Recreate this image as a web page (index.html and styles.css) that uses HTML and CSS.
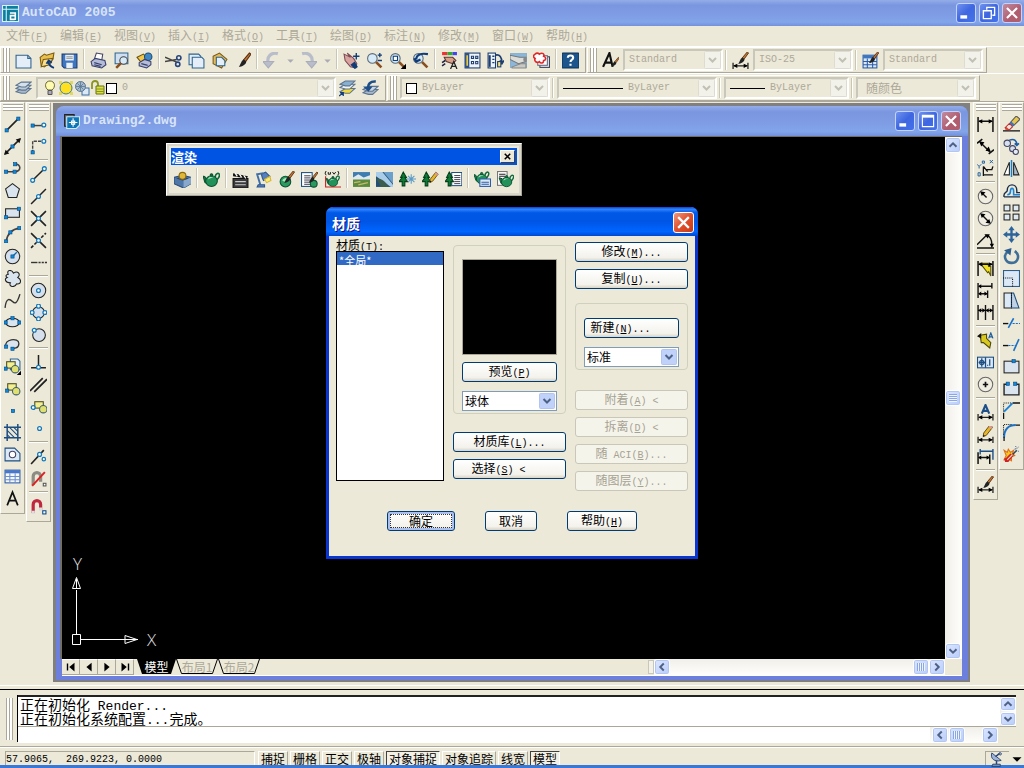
FILE: index.html
```html
<!DOCTYPE html>
<html lang="zh-CN">
<head>
	<meta charset="utf-8">
	<title>AutoCAD 2005</title>
	<link rel="stylesheet" href="styles.css">
</head>
<body>
	<header class="titlebar app-title">
		<svg class="app-logo" viewBox="0 0 16 16"><rect width="16" height="16" fill="#0b7f9e"/><path d="M.5.5h15v15H.5zM4 1v15M1 4h15" stroke="#d8f2fa" fill="none"/><path d="M7.500 7.500h5v6.500M12 10H8v3.500h4" stroke="#fff" stroke-width="1.500" fill="none"/></svg>
		<h1>AutoCAD 2005</h1>
		<button class="win-btn" data-icon="winMin" aria-label="最小化"></button>
		<button class="win-btn" data-icon="winRestore" aria-label="还原"></button>
		<button class="win-btn win-close" data-icon="winClose" aria-label="关闭"></button>
	</header>

	<nav class="menu">
		<button>文件<span class="en">(<u>F</u>)</span></button>
		<button>编辑<span class="en">(<u>E</u>)</span></button>
		<button>视图<span class="en">(<u>V</u>)</span></button>
		<button>插入<span class="en">(<u>I</u>)</span></button>
		<button>格式<span class="en">(<u>O</u>)</span></button>
		<button>工具<span class="en">(<u>T</u>)</span></button>
		<button>绘图<span class="en">(<u>D</u>)</span></button>
		<button>标注<span class="en">(<u>N</u>)</span></button>
		<button>修改<span class="en">(<u>M</u>)</span></button>
		<button>窗口<span class="en">(<u>W</u>)</span></button>
		<button>帮助<span class="en">(<u>H</u>)</span></button>
	</nav>

	<div class="bar-row">
		<div class="toolbar">
			<span class="grip"></span>
			<div class="tools" data-tools="newFile open save | print preview publish | cut copy paste match | undo drop redo drop | pan zoom zoomWin zoomPrev | properties designCenter palettes sheetSet markup | help"></div>
		</div>
		<div class="toolbar">
			<span class="grip"></span>
			<div class="tools" data-tools="textStyle"></div>
			<div class="combo w100"><select class="en" aria-label="文字样式" disabled><option>Standard</option></select></div>
			<span class="sep"></span>
			<div class="tools" data-tools="dimStyle"></div>
			<div class="combo w100"><select class="en" aria-label="标注样式" disabled><option>ISO-25</option></select></div>
			<span class="sep"></span>
			<div class="tools" data-tools="tableStyle"></div>
			<div class="combo w100"><select class="en" aria-label="表格样式" disabled><option>Standard</option></select></div>
		</div>
	</div>

	<div class="bar-row bar-row-2">
		<div class="toolbar">
			<span class="grip"></span>
			<div class="tools" data-tools="layers"></div>
			<div class="combo w300">
				<span class="layer-state" data-icon="bulb"></span>
				<span class="layer-state" data-icon="sun"></span>
				<span class="layer-state" data-icon="vpFreeze"></span>
				<span class="layer-state" data-icon="lock"></span>
				<span class="swatch"></span>
				<select class="en" aria-label="图层" disabled><option>0</option></select>
			</div>
			<div class="tools" data-tools="layerCurrent layerPrev"></div>
		</div>
		<div class="toolbar">
			<span class="grip"></span>
			<div class="combo w150"><span class="swatch"></span><select class="en" aria-label="颜色" disabled><option>ByLayer</option></select></div>
			<span class="sep"></span>
			<div class="combo w160"><span class="line-sample long"></span><select class="en" aria-label="线型" disabled><option>ByLayer</option></select></div>
			<span class="sep"></span>
			<div class="combo w125"><span class="line-sample"></span><select class="en" aria-label="线宽" disabled><option>ByLayer</option></select></div>
			<span class="sep"></span>
			<div class="combo w120"><select aria-label="打印样式" disabled><option>随颜色</option></select></div>
		</div>
	</div>

	<main class="workspace">
		<div class="side-bars">
			<div class="toolbar vertical">
				<span class="grip"></span>
				<div class="tools" data-tools="line xline pline polygon rect arc circle cloud spline ellipse ellipseArc insertBlock makeBlock point hatch region table mtext"></div>
			</div>
			<div class="toolbar vertical">
				<span class="grip"></span>
				<div class="tools" data-tools="track snapFrom | snapEnd snapMid snapInt snapApp snapExt | snapCen snapQuad snapTan | snapPerp snapPar snapIns snapNode | snapNear snapNone | snapSet"></div>
			</div>
		</div>

		<div class="mdi">
			<section class="drawing">
				<header class="titlebar">
					<svg class="doc-logo" viewBox="0 0 16 16"><path d="M1.500 1.500h9v3H5v8H1.500z" fill="#6c7379" stroke="#222"/><path d="M3.500 3.500h12v8l-3 3h-9z" fill="#0b76b4" stroke="#cfeafa"/><path d="M9.500 5v8M5.500 9h8" stroke="#fff"/><path d="M8 7.500h3v3H8z" stroke="#fff" fill="none"/></svg>
					<h2>Drawing2.dwg</h2>
					<button class="win-btn" data-icon="winMin" aria-label="最小化"></button>
					<button class="win-btn" data-icon="winMax" aria-label="最大化"></button>
					<button class="win-btn win-close" data-icon="winClose" aria-label="关闭"></button>
				</header>

				<div class="view">
					<div class="canvas">
						<svg class="ucs" width="104" height="104" viewBox="0 0 104 104">
							<path d="M6.500 84V39M11 88.500h57M2.500 83.500h8v10h-8z"/>
							<path d="M6.500 26.500l-4 11h8zM6.500 28v9M67 88.500l-12-4v8zM56 88.500h11"/>
							<text x="3" y="19">Y</text>
							<text x="77" y="95">X</text>
						</svg>

						<div class="render-bar">
							<header><h3>渲染</h3><button aria-label="关闭" data-icon="smallClose"></button></header>
							<div class="tools" data-tools="hide | render | scenes lights materials matLib mapping | background fog lsNew lsEdit lsLib | renderPrefs stats"></div>
						</div>

						<form class="dialog">
							<header><h2>材质</h2><button type="button" class="win-btn win-close" data-icon="winClose" aria-label="关闭"></button></header>
							<div class="dialog-body">
								<div class="columns">
									<div class="col-list">
										<label for="mats">材质<span class="en">(<u>T</u>):</span></label>
										<select id="mats" size="2"><option selected>*全局*</option></select>
									</div>
									<div class="col-preview">
										<div class="group">
											<div class="preview"></div>
											<button type="button">预览<span class="en">(<u>P</u>)</span></button>
											<select class="drop" aria-label="预览对象"><option>球体</option></select>
										</div>
										<button type="button">材质库<span class="en">(<u>L</u>)...</span></button>
										<button type="button" class="lead">选择<span class="en">(<u>S</u>) &lt;</span></button>
									</div>
									<div class="col-actions">
										<button type="button">修改<span class="en">(<u>M</u>)...</span></button>
										<button type="button">复制<span class="en">(<u>U</u>)...</span></button>
										<div class="group">
											<button type="button" class="lead">新建<span class="en">(<u>N</u>)...</span></button>
											<select class="drop" aria-label="材质类型"><option>标准</option></select>
										</div>
										<button type="button" disabled>附着<span class="en">(<u>A</u>) &lt;</span></button>
										<button type="button" disabled>拆离<span class="en">(<u>D</u>) &lt;</span></button>
										<button type="button" disabled>随<span class="en"> ACI(<u>B</u>)...</span></button>
										<button type="button" disabled>随图层<span class="en">(<u>Y</u>)...</span></button>
									</div>
								</div>
								<div class="dialog-foot">
									<button type="button" class="default">确定</button>
									<button type="button" class="cancel">取消</button>
									<button type="button" class="assist">帮助<span class="en">(<u>H</u>)</span></button>
								</div>
							</div>
						</form>
					</div>
					<div class="scroll scroll-v">
						<button data-icon="up" aria-label="向上"></button>
						<span class="thumb"></span>
						<button data-icon="down" aria-label="向下"></button>
					</div>
				</div>

				<div class="tab-row">
					<div class="tab-nav">
						<button data-icon="first" aria-label="第一个"></button>
						<button data-icon="prev" aria-label="上一个"></button>
						<button data-icon="next" aria-label="下一个"></button>
						<button data-icon="last" aria-label="最后一个"></button>
					</div>
					<button class="tab active">模型</button>
					<button class="tab">布局1</button>
					<button class="tab">布局2</button>
					<span class="splitter"></span>
					<div class="scroll scroll-h">
						<button data-icon="left" aria-label="向左"></button>
						<span class="thumb"></span>
						<button data-icon="right" aria-label="向右"></button>
					</div>
				</div>
			</section>
		</div>

		<div class="side-bars">
			<div class="toolbar vertical">
				<span class="grip"></span>
				<div class="tools" data-tools="dimLinear dimAligned dimOrd | dimRad dimDia dimAng | dimQuick dimBase dimCont | leader tolerance centerMark | dimEdit dimTextEdit dimUpdate | dimStyle"></div>
			</div>
			<div class="toolbar vertical">
				<span class="grip"></span>
				<div class="tools" data-tools="erase copyObj mirror offset array move rotate scale stretch trim extend breakAt break chamfer fillet explode"></div>
			</div>
		</div>
	</main>

	<section class="command">
		<span class="grip"></span>
		<div class="command-box">
			<div class="history">
				<div class="log">
					<p>正在初始化<span> Render...</span></p>
					<p>正在初始化系统配置<span>...</span>完成。</p>
				</div>
				<div class="scroll scroll-v">
					<button data-icon="up" aria-label="向上"></button>
					<button data-icon="down" aria-label="向下"></button>
				</div>
			</div>
			<div class="prompt">
				<input type="text" aria-label="命令行">
				<div class="scroll scroll-h">
					<button data-icon="left" aria-label="向左"></button>
					<span class="thumb"></span>
					<button data-icon="right" aria-label="向右"></button>
				</div>
			</div>
		</div>
	</section>

	<footer class="status">
		<output class="coords en">57.9065,  269.9223, 0.0000</output>
		<button>捕捉</button>
		<button>栅格</button>
		<button>正交</button>
		<button>极轴</button>
		<button class="on">对象捕捉</button>
		<button>对象追踪</button>
		<button>线宽</button>
		<button class="on">模型</button>
		<span class="tray" data-icon="dish"></span>
		<button class="tray-menu" data-icon="caret" aria-label="状态栏菜单"></button>
	</footer>

	<script src="icons.js"></script>
</body>
</html>
```

FILE: styles.css
```css
* {
	box-sizing: border-box;
}

html, body {
	height: 100%;
	margin: 0;
}

body {
	display: flex;
	flex-direction: column;
	background: #ece9d8;
	color: #000;
	font: 12px/14px "Noto Sans CJK SC", sans-serif;
	overflow: hidden;
}

h1, h2, h3, p {
	margin: 0;
	font-weight: normal;
}

button, select, input {
	margin: 0;
	padding: 0;
	border: 0;
	background: none;
	color: inherit;
	font: inherit;
}

.en {
	font-family: "Liberation Mono", monospace;
	font-size: 10px;
	white-space: pre;
}

svg {
	display: block;
	flex: none;
}

/* title bars */
.titlebar {
	display: flex;
	align-items: center;
	gap: 3px;
	height: 30px;
	padding: 0 7px;
	flex: none;
	color: #d8e4f8;
	background: linear-gradient(#93ade9, #7a96df 20%, #7f9de5 60%, #82a5e9 85%, #7390dc);
}

.titlebar h1, .titlebar h2 {
	flex: 1;
	font: bold 13px/16px "Liberation Mono", monospace;
}

.app-title {
	height: 26px;
	padding: 0 2px;
}

.app-logo, .doc-logo {
	width: 17px;
	height: 17px;
}

.win-btn {
	display: flex;
	width: 20px;
	height: 20px;
	border: 1px solid #c3d3fb;
	border-radius: 3px;
	background: linear-gradient(135deg, #6f92ee, #3e66e0 50%, #4473ea);
}

.win-btn svg {
	width: 18px;
	height: 18px;
}

.win-close {
	background: linear-gradient(135deg, #c08b9e, #b05c70 60%, #b0606c);
}

/* menu */
.menu {
	display: flex;
	gap: 12px;
	height: 20px;
	padding-left: 6px;
	flex: none;
	color: #aca899;
}

.menu button {
	width: 42px;
	white-space: nowrap;
}

/* toolbars */
.bar-row {
	display: flex;
	gap: 1px;
	height: 27px;
	flex: none;
	border-top: 1px solid #fff;
}

.bar-row-2 {
	height: 29px;
	padding-top: 1px;
	border-bottom: 1px solid #aca899;
}

.toolbar {
	display: flex;
	align-items: center;
	padding-right: 3px;
	border: 1px solid #aca899;
	border-top-color: #fff;
	border-left-color: #fff;
}

.grip {
	width: 7px;
	height: 24px;
	margin: 0 2px;
	border: solid #aca899;
	border-width: 0 1px;
	background: linear-gradient(90deg, #fff 0 2px, #aca899 2px 3px, #fff 3px 5px);
}

.tools {
	display: flex;
}

.tool {
	display: flex;
	align-items: center;
	justify-content: center;
	width: 23px;
	height: 22px;
}

.tool svg {
	width: 17px;
	height: 17px;
}

.tool.narrow {
	width: 14px;
}

.sep {
	width: 6px;
	height: 20px;
	flex: none;
	background: linear-gradient(90deg, transparent 2px, #c9c6b6 2px 3px, #fff 3px 4px, transparent 4px);
}

.combo {
	display: flex;
	align-items: center;
	height: 22px;
	margin-left: 1px;
	padding-left: 4px;
	border: 2px solid #c9c7ba;
	border-right-color: #fff;
	border-bottom-color: #fff;
}

.combo select {
	appearance: none;
	flex: 1;
	min-width: 0;
	height: 18px;
	color: #aca899;
	opacity: 1;
	background: url("data:image/svg+xml,%3Csvg xmlns='http://www.w3.org/2000/svg' width='17' height='18'%3E%3Crect x='.5' y='.5' width='16' height='17' rx='1' fill='%23f3f2ea' stroke='%23dedcd0'/%3E%3Cpath d='M5 7l3.500 3.500L12 7' fill='none' stroke='%23c2c0b4' stroke-width='2'/%3E%3C/svg%3E") right center no-repeat;
}

.w100 { width: 100px; }
.w120 { width: 120px; }
.w125 { width: 125px; }
.w150 { width: 150px; }
.w160 { width: 160px; }
.w300 { width: 300px; }

.w120 select {
	padding-left: 4px;
}

.layer-state, .layer-state svg {
	width: 16px;
	height: 16px;
}

.swatch {
	width: 11px;
	height: 11px;
	margin-right: 5px;
	border: 1px solid #000;
	background: #fff;
}

.line-sample {
	width: 35px;
	height: 1px;
	margin-right: 5px;
	background: #000;
}

.line-sample.long {
	width: 60px;
}

.vertical, .vertical .tools {
	flex-direction: column;
}

.vertical {
	width: 25px;
	padding: 0 0 4px;
}

.vertical .grip {
	width: 20px;
	height: 7px;
	margin: 1px 0 2px;
	border-width: 1px 0;
	background: linear-gradient(#fff 0 2px, #aca899 2px 3px, #fff 3px 5px);
}

.vertical .sep {
	width: 19px;
	height: 6px;
	margin: 0 auto;
	background: linear-gradient(transparent 2px, #aca899 2px 3px, #fff 3px 4px, transparent 4px);
}

/* workspace */
.workspace {
	display: flex;
	flex: 1;
	min-height: 0;
}

.side-bars {
	display: flex;
	align-items: flex-start;
	gap: 1px;
}

.mdi {
	display: flex;
	flex: 1;
	min-width: 0;
	margin: 1px 3px 3px 2px;
	padding: 3px 2px 2px 3px;
	background: #808080;
}

.drawing {
	display: flex;
	flex-direction: column;
	flex: 1;
	min-width: 0;
	padding: 0 6px 4px 4px;
	border-radius: 8px 8px 0 0;
	background: #6d7fdd;
}

.drawing > .titlebar {
	height: 30px;
	margin: 0 -6px 0 -4px;
	border-radius: 8px 8px 0 0;
}

.view {
	display: flex;
	flex: 1;
	min-height: 0;
	border: 1px solid #716f64;
	border-width: 1px 0 0 2px;
}

.canvas {
	position: relative;
	display: flex;
	align-items: flex-end;
	flex: 1;
	min-width: 0;
	padding: 0 8px 4px;
	background: #000;
}

.ucs {
	fill: none;
	stroke: #fff;
}

.ucs text {
	fill: #e0e0e0;
	stroke: none;
	font: 300 17px "Open Sans", sans-serif;
}

/* scroll bars */
.scroll {
	display: flex;
	flex: none;
	justify-content: space-between;
	background: #f8f7f2;
}

.scroll-v {
	flex-direction: column;
	width: 17px;
	padding-right: 1px;
	background: linear-gradient(90deg, #f1efe9, #fefefc);
}

.scroll-h {
	height: 16px;
	background: linear-gradient(#f1efe9, #fefefc);
}

.scroll button, .thumb {
	display: flex;
	align-items: center;
	justify-content: center;
	width: 16px;
	height: 16px;
	border: 1px solid #fff;
	border-radius: 3px;
	background: linear-gradient(135deg, #dce6ff, #b9cdfa);
	box-shadow: inset 0 0 0 1px #b2c6f2;
}

.scroll svg {
	width: 14px;
	height: 14px;
}

.thumb::before {
	content: "";
	width: 8px;
	height: 8px;
	background: repeating-linear-gradient(90deg, #8ba6e4 0 1px, #eef4fe 1px 2px);
}

.scroll-v .thumb::before {
	background: repeating-linear-gradient(#8ba6e4 0 1px, #eef4fe 1px 2px);
}

.scroll-h .thumb {
	margin-left: auto;
}

/* layout tabs */
.tab-row {
	display: flex;
	height: 17px;
	flex: none;
	padding-right: 17px;
	margin-left: 2px;
	background: #ece9d8;
	border-bottom: 1px solid #fff;
}

.tab-nav {
	display: flex;
	margin-right: 3px;
}

.tab-nav button {
	width: 18px;
	padding-left: 1px;
	border-right: 1px solid #aca899;
	border-bottom: 1px solid #aca899;
	border-top: 1px solid #fff;
}

.tab-nav svg {
	width: 16px;
	height: 14px;
}

.tab {
	width: 42px;
	height: 15px;
	line-height: 14px;
	color: #aca899;
	background: url("data:image/svg+xml,%3Csvg xmlns='http://www.w3.org/2000/svg' width='42' height='15'%3E%3Cpath d='M.5 0l5 14.500h31L41.500 0' fill='none' stroke='%23000'/%3E%3C/svg%3E") no-repeat;
}

.tab.active {
	width: 39px;
	color: #fff;
	background: url("data:image/svg+xml,%3Csvg xmlns='http://www.w3.org/2000/svg' width='39' height='15'%3E%3Cpath d='M0 0l5 15h29l5-15'/%3E%3C/svg%3E") no-repeat;
}

.splitter {
	width: 6px;
	height: 14px;
	margin: 1px 0 0 auto;
	border: 1px solid #c9c7ba;
	background: #f4f2e8;
}

.tab-row .scroll {
	width: 33%;
}

/* floating render toolbar */
.render-bar {
	position: absolute;
	left: 104px;
	top: 6px;
	padding: 4px;
	border: 1px solid #aca899;
	border-top-color: #fff;
	border-left-color: #fff;
	background: #ece9d8;
	box-shadow: inset 0 0 0 2px #d9d6cb;
}

.render-bar header {
	display: flex;
	align-items: center;
	height: 17px;
	padding: 0 2px 0 0;
	color: #fff;
	background: #0054e3;
}

.render-bar h3 {
	flex: 1;
	font-size: 13px;
	line-height: 15px;
	font-weight: bold;
}

.render-bar header button {
	width: 15px;
	height: 13px;
	border: 1px solid #404040;
	border-top-color: #fff;
	border-left-color: #fff;
	background: #ece9d8;
}

.render-bar header svg {
	width: 13px;
	height: 11px;
}

.render-bar .tools {
	padding: 3px 0 1px;
}

/* materials dialog */
.dialog {
	position: absolute;
	left: 264px;
	top: 70px;
	width: 372px;
	border: 3px solid #0a35d0;
	border-top: 0;
	border-radius: 7px 7px 0 0;
	background: #ece9d8;
}

.dialog > header {
	display: flex;
	align-items: center;
	height: 29px;
	margin: 0 -3px;
	padding: 2px 4px 0 6px;
	border-radius: 7px 7px 0 0;
	color: #fff;
	background: linear-gradient(#0a3fd6, #2d84ff 8%, #0058e6 20%, #0055e5 50%, #0066ff 85%, #0048d0);
}

.dialog > header h2 {
	flex: 1;
	font-size: 14px;
	line-height: 20px;
	font-weight: bold;
	text-shadow: 1px 1px #0f1089;
}

.dialog > header .win-btn {
	width: 21px;
	height: 21px;
	border-color: #fff;
	background: linear-gradient(135deg, #f0987c, #e0502c 50%, #c83a14);
}

.dialog > header svg {
	width: 19px;
	height: 19px;
}

.dialog-body {
	padding: 2px 7px 25px;
}

.columns {
	display: grid;
	grid-template-columns: 108px 113px 113px;
	gap: 9px;
}

.dialog-body button {
	display: block;
	width: 100%;
	height: 20px;
	border: 1px solid #003c74;
	border-radius: 3px;
	line-height: 16px;
	background: linear-gradient(#fff, #f3f2ec 80%, #d9d4c8);
}

.dialog-body button:disabled {
	border-color: #c9c7ba;
	color: #a5a294;
	background: #f5f4ea;
}

.dialog-body button.lead {
	padding-right: 22px;
}

.group {
	border: 1px solid #d0d0bf;
	border-radius: 4px;
}

.drop {
	appearance: none;
	display: block;
	width: 100%;
	height: 20px;
	padding-left: 2px;
	border: 1px solid #7f9db9;
	background: #fff url("data:image/svg+xml,%3Csvg xmlns='http://www.w3.org/2000/svg' width='16' height='16'%3E%3Crect x='.5' y='.5' width='15' height='15' rx='1' fill='%23c1d2fa' stroke='%23b1c5f0'/%3E%3Cpath d='M4.500 6L8 9.500 11.500 6' fill='none' stroke='%234d6185' stroke-width='2'/%3E%3C/svg%3E") right 1px center no-repeat;
}

.col-list label {
	display: block;
	height: 13px;
	line-height: 14px;
}

#mats {
	display: block;
	width: 100%;
	height: 230px;
	border: 1px solid #000;
	border-radius: 0;
	background: #fff;
	overflow: hidden;
	outline: 0;
	font-size: 11px;
}

#mats option {
	height: 13px;
	min-height: 13px;
	padding: 0 2px;
	line-height: 12px;
}

#mats option:checked {
	color: #fff;
	background: linear-gradient(#316ac5, #316ac5);
}

.col-preview {
	padding-top: 7px;
}

.col-preview .group {
	padding: 13px 8px 2px;
	margin-bottom: 18px;
}

.preview {
	height: 96px;
	margin-bottom: 7px;
	border: 1px solid #aca899;
	background: #000;
}

.col-preview .group button {
	margin-bottom: 9px;
}

.col-preview > button + button, .col-actions > button + button {
	margin-top: 7px;
}

.col-actions {
	padding-top: 4px;
}

.col-actions .group {
	margin: 14px 0 20px;
	padding: 14px 8px 2px;
}

.col-actions .group button {
	margin-bottom: 9px;
}

.dialog-foot {
	display: flex;
	gap: 30px;
	padding: 20px 51px 0;
}

.dialog-foot .default {
	width: 68px;
	box-shadow: inset 0 0 0 2px #a9c0f0;
	outline: 1px dotted #333;
	outline-offset: -4px;
}

.dialog-foot .cancel {
	width: 52px;
}

.dialog-foot .assist {
	width: 70px;
}

/* command window */
.command {
	display: flex;
	height: 62px;
	flex: none;
	padding: 5px 8px 4px 4px;
	border-top: 1px solid #fff;
	border-bottom: 1px solid #aca899;
	background: linear-gradient(#ece9d8 3px, #000 3px 4px, #ece9d8 4px);
}

.command > .grip {
	height: 42px;
	margin: 7px 4px 0 2px;
}

.command-box {
	flex: 1;
	min-width: 0;
	margin-top: 4px;
	border-left: 1px solid #000;
}

.history {
	display: flex;
	height: 32px;
	border-top: 2px solid #222;
	border-bottom: 1px solid #aca899;
	background: #fff;
}

.log {
	flex: 1;
	padding-left: 2px;
	font-size: 14px;
}

.log p {
	height: 14px;
	line-height: 14px;
	white-space: pre;
}

.log span {
	font-family: "Liberation Mono", monospace;
	font-size: 13px;
}

.history .scroll-v {
	width: 16px;
	padding: 0;
}

.history .scroll button {
	height: 14px;
}

.prompt {
	display: flex;
	padding-right: 18px;
}

.prompt input {
	flex: 1;
	min-width: 0;
	height: 16px;
	background: #fff;
	outline: 0;
}

.prompt .scroll {
	width: 68px;
	padding-left: 2px;
}

.prompt .thumb {
	margin: 0 auto 0 1px;
}

/* status bar */
.status {
	display: flex;
	align-items: stretch;
	gap: 2px;
	height: 21px;
	flex: none;
	padding: 3px 1px 0 5px;
	border-top: 1px solid #fff;
	border-bottom: 3px solid #3a78d8;
}

.coords {
	width: 250px;
	margin-right: 1px;
	border: 1px solid #aca899;
	border-right-color: #fff;
	border-bottom: 0;
	line-height: 15px;
}

.status button {
	padding: 0 2px;
	border: 1px solid #fff;
	border-right-color: #aca899;
	border-bottom: 0;
	white-space: nowrap;
}

.status button.on {
	border-color: #404040 #fff #fff #404040;
	background: #f3f1e6;
}

.tray {
	width: 24px;
	margin-left: auto;
	padding-left: 3px;
	border-left: 1px solid #aca899;
	border-top: 1px solid #aca899;
}

.tray svg {
	width: 15px;
	height: 15px;
}

.status .tray-menu {
	width: 12px;
	padding: 0;
	border: 0;
}

.tray-menu svg {
	width: 12px;
	height: 14px;
}
```

FILE: icons.js
```js
// small pieces that several icons share
const sq = (x, y) => `<rect x="${x - 1.5}" y="${y - 1.5}" width="3" height="3" fill="#0a8be0" stroke="#0a4a80" stroke-width=".6"/>`;
const ring = (x, y, r = 1.8) => `<circle cx="${x}" cy="${y}" r="${r}" fill="#fff" stroke="#1578b8" stroke-width="1.200"/>`;
const p = (d, stroke = '#222', width = 1.2, fill = 'none') => `<path d="${d}" stroke="${stroke}" stroke-width="${width}" fill="${fill}"/>`;
const f = (d, fill, stroke = 'none') => `<path d="${d}" fill="${fill}" stroke="${stroke}"/>`;
const c = (x, y, r, fill = '#d5e0ec', stroke = '#222') => `<circle cx="${x}" cy="${y}" r="${r}" fill="${fill}" stroke="${stroke}"/>`;
const box = (x, y, w, h, fill = '#dbe8f6', stroke = '#1d4e80') => `<rect x="${x}" y="${y}" width="${w}" height="${h}" fill="${fill}" stroke="${stroke}"/>`;
const at = (x, y, s, body) => `<g transform="translate(${x} ${y}) scale(${s})">${body}</g>`;

const brush = f('M14.500 0l1.500 1-5 7-2-1.500z', '#c07838', '#5c3010') + f('M9 6l2.500 2c0 3-4 5-7 5 1.500-1.500 2-5.500 4.500-7z', '#222');
const pencil = f('M12 0l3 2.500-7 9-3.500 1.500.5-4z', '#e5b52c', '#5a4310') + f('M12 0l3 2.500-1.500 2-3-2.500z', '#d99') + f('M4.500 13l.3-2 1.500 1z', '#000');
const teapot = '<path d="M11.500 6c0-4 4-5 4-2 0 2-1.500 3-2.500 4.500" fill="none" stroke="#0f6a3c" stroke-width="1.500"/>' + f('M0 5c1.500-.5 2.500 1 3 3l1 4-2-1C1 9 1 7 0 5z', '#1c7c4a', '#0b5230') + '<ellipse cx="8" cy="9.500" rx="5.500" ry="5" fill="#23915a" stroke="#0b5230"/>' + f('M4.500 8c1-3 4-3 5-2-2 0-3 1-5 2z', '#a8e8bc') + c(8, 3.8, 1.2, '#167045', '#0b5230');
const layer = (y, fill) => f(`M1 ${y + 3}l5-3h9l-5 4.500H6z`, fill, '#5d7590');
const hdim = y => p(`M1 ${y - 3}v6M15 ${y - 3}v6M2 ${y}h12`) + f(`M1 ${y}l4-2v4zM15 ${y}l-4-2v4z`, '#000');
const tree = f('M4 1l3 5H5.500L8 10H5.500v4H3v-4H0l3-4H1.500z', '#0c7a34', '#063f1a');
const lens = c(6, 6, 4.5, '#d6eaf8', '#5b6b78') + p('M9.500 9.500l5 5', '#8a4f20', 2.5);
const block = box(2.5, 3.5, 8, 6, '#f3ee90', '#4d4d20') + c(10.500, 10.500, 3.5, '#e0e070', '#3d5e70');
const magnet = '<path d="M3 14V6a3.500 3.500 0 0 1 7 0v5" fill="none" stroke-width="3" stroke="';
const sheet = box(3.5, 1.5, 10, 13, '#fff', '#1d4e80') + p('M6 4.500h6M6 6.500h6M6 8.500h6M6 10.500h6M6 12.500h6', '#334', 0.9);
const undoArrow = p('M14 1.500C8 0 3 4 5 11', '#b9bdc9', 3) + f('M0 9l10 0-5 6z', '#b9bdc9', '#a9adbb');

const icons = {
	// standard toolbar
	newFile: f('M1 3h11l3 3v9H1z', '#e4eef8', '#2e6490') + p('M12 3v3h3', '#2e6490', 1),
	open: f('M2 5l4-3 2 1 7-2-1 6-8 7-3-1z', '#e8c04c', '#7a5a10') + f('M5 7l9-1-3 6-8 2z', '#f8e090', '#7a5a10') + p('M15 15c-3-1-5-3-5-6M8 11l2-3 3 2', '#123c78', 1.8),
	save: f('M1 2h14v13H3l-2-2z', '#3f76c0', '#1c3c74') + f('M4 2.500h8V8H4zM5 10h6v5H5z', '#e8f0f8') + p('M5 4.500h6M5 6h6', '#888', 0.8),
	print: f('M4 7l2-6 6 1-1 6z', '#fff', '#446') + f('M1 9l4-3 9 2 1 4-4 3-9-2z', '#b4bcd8', '#39406c') + p('M4 10l7 2M4 12l6 1.500', '#39406c'),
	preview: f('M2 1h12v10H2z', '#cfe0f2', '#2e6490') + c(10, 8, 3.6, '#d6eaf8', '#444') + p('M7.500 10.500L3 15', '#8a4f20', 2.4),
	publish: f('M1 5l6-3 4 4-6 4z', '#f0c84c', '#6b5212') + c(11.5, 4.5, 3.5, '#3f88c4', '#1c4a74') + f('M3 10l5-3 6 2v3l-4 3-7-2z', '#b4bcd8', '#39406c') + p('M5 11l6 1.500', '#39406c'),
	cut: p('M0 5l11 4.500M0 9L11 7', '#444', 1.4) + '<circle cx="13" cy="5.500" r="2" fill="none" stroke="#27457c" stroke-width="1.500"/><circle cx="12" cy="11.500" r="2" fill="none" stroke="#27457c" stroke-width="1.500"/>',
	copy: f('M1 2h9l2 2v8H1z', '#e4eef8', '#2e6490') + f('M4 5h9l2 2v8H4z', '#e4eef8', '#2e6490'),
	paste: f('M2 4l6-3 7 6-5 8-8-4z', '#e3bc58', '#7a5a1c') + f('M5 5h5l3 3v5H5z', '#e4eef8', '#2e6490'),
	match: at(0, 1, 1, brush),
	undo: undoArrow,
	redo: `<g transform="translate(16 0) scale(-1 1)">${undoArrow}</g>`,
	drop: f('M5 7h6l-3 3z', '#a8aab4'),
	pan: f('M1 2l6 3-3-4 6 5 3 5-1 4-5-1-5-6z', '#d9a4a0', '#7c4c54') + f('M7 12l4-3 3 5-3 2z', '#123c78') + p('M12.500 1v6M9.500 4h6', '#123c78', 1.3),
	zoom: lens + p('M11 3h4M13 1v4M11 8h4', '#123c78'),
	zoomWin: lens + box(4, 4, 4, 4, '#fff', '#123c78') + f('M16 11v5h-5z', '#000'),
	zoomPrev: lens + p('M4 7c0-5 5-6 11-5M2 6l2 3 4-2', '#123c78', 2),
	properties: '<rect x="1" y="0" width="5" height="3" fill="#e33"/><rect x="6" y="0" width="5" height="3" fill="#3a3"/><rect x="11" y="0" width="4" height="3" fill="#44e"/>' + f('M3 5l8 0 3 3-3 3-6-2z', '#d9a08c', '#5c3630') + p('M1 10l3-2M1 13l3-2', '#224', 1.5) + p('M9 16l3-7 3 7M10 13.500h4', '#222', 1.2),
	designCenter: box(1, 1, 14, 14, '#eef4fa', '#1d3e70') + f('M1 1h4v14H1z', '#2b528c') + p('M3 3v10', '#f0d040', 1.5) + '<path d="M7 4h2v2H7zM11 4h2v2h-2zM7 9h2v2H7zM11 9h2v2h-2z" fill="#fff" stroke="#1d3e70"/>',
	palettes: box(1, 1, 7, 14, '#eef4fa', '#1d3e70') + p('M2.500 3v11', '#1d3e70', 2) + p('M5 4h2M5 7h2M5 10h2', '#1d3e70') + p('M8 3c4-1 6 2 6 7M12 8l2 3 2-3', '#1d3e70', 1.6) + box(10, 9, 3, 5, '#f4e58a', '#1d3e70'),
	sheetSet: box(0.5, 1.5, 15, 13, '#8ab8dc', '#8ab0cc') + f('M0 3l9 2 6 0v4l-7 2-8-4z', '#dcdcd8', '#777') + '<ellipse cx="14" cy="7" rx="1.500" ry="2.200" fill="#888"/>' + f('M2 14l8-3 5 0v4H2z', '#c8c8c4', '#888'),
	markup: box(6.5, 4.5, 9, 10, '#dbe8f6', '#445') + box(4.5, 3.5, 9, 9, '#fff', '#667') + '<path d="M2 2c2-2 3-1 4 0 3-2 5 0 4 2 3 1 2 4 0 4 0 3-3 3-4 1-3 2-5-1-4-3-2-1-2-3 0-4z" fill="#fff" stroke="#e02828" stroke-width="1.500"/>',
	help: '<rect x="0" y="1" width="16" height="14" rx="1" fill="#1d568c" stroke="#0c3058"/>' + p('M5.500 5.500c0-3 5-3 5 0 0 2-2.500 1.500-2.500 4M8 11v2', '#fff', 2),
	textStyle: p('M1 14L7 1l3 13M3 10h6', '#111', 2) + at(6, 5, 0.65, brush),
	dimStyle: at(2, 0, 0.85, brush) + hdim(13),
	tableStyle: box(1, 3, 13, 12, '#dbe8f6', '#2c5ca8') + f('M1 3h13v3H1z', '#3f76c0') + p('M1 9h13M1 12h13M5 6v9M10 6v9', '#2c5ca8', 1) + at(3, 0, 0.8, brush),

	// layers
	layers: layer(8, '#a9b9c9') + layer(5, '#bccbd8') + layer(2, '#d6e0ea'),
	layerCurrent: layer(8, '#f0d838') + layer(4, '#f0f4f8') + layer(1, '#88b0d0') + p('M0 15l4-3M1 12h3v3', '#123c78'),
	layerPrev: layer(9, '#a9b9c9') + layer(6, '#c8d5e2') + p('M6 8C5 4 8 1 13 1.500', '#1d4e88', 2.4) + f('M1 6h9l-4 5z', '#1d4e88'),
	bulb: f('M6 10C2 7 3 1 8 1s6 6 2 9z', '#fffbb0', '#6b6a30') + f('M6 10.500h4v4H6z', '#a9a9b8', '#555'),
	sun: f('M1 1h3v3H1zM12 1h3v3h-3zM1 12h3v3H1zM12 12h3v3h-3z', '#e0d860') + c(8, 8, 6, '#ffe020', '#3a7c9c'),
	vpFreeze: box(8, 8, 7, 7, '#dbe8f6', '#3b6ea8') + c(6.5, 6.5, 5, '#a8bccc', '#587894') + p('M6.500 2v9M2 6.500h9M3.500 3.500l6 6M9.500 3.500l-6 6', '#587894', 0.8),
	lock: p('M2 9V4c0-4 6-4 6 0v2', '#8a9420', 1.8) + f('M6 6h8v8H6z', '#d8e040', '#66701a') + p('M6 9h8M6 11.500h8', '#8a9420', 1),

	// draw
	line: p('M2 14L14 2', '#222', 1.5) + sq(2.5, 13.5) + sq(13.5, 2.5),
	xline: p('M1 15L15 1', '#222', 1.5) + f('M0 16l1.500-5 3.500 3.500zM16 0l-1.500 5L11 1.500z', '#111') + sq(8, 8),
	pline: p('M2 11h8c7 0 6-8 0-7', '#444', 1.5) + sq(2, 11) + sq(10, 11) + sq(10.5, 4),
	polygon: f('M8 1.500l6.500 5-2.500 8H4l-2.500-8z', '#d9e4ee', '#222'),
	rect: box(1.5, 4.5, 13, 8, '#d9e4ee', '#222') + sq(2, 12.5) + sq(14, 4.5),
	arc: p('M2 15C3 7 7 3 15 2', '#444', 1.5) + sq(2, 14.5) + sq(6, 6) + sq(14.5, 2),
	circle: c(8, 8, 6.8) + p('M8 8l4-4', '#0a6ab0') + sq(8, 8),
	cloud: f('M4 4C2 0 7-1 9 3c4-3 7 1 4 4 4 2 3 7-1 6-2 4-8 3-6-1-5 0-6-4-3-5-2-1-1-3 1-3z', '#d9e4ee', '#222'),
	spline: p('M1 15C2 4 6 7 8 9s4 3 7-7', '#333', 1.3),
	ellipse: '<ellipse cx="8" cy="8" rx="6.500" ry="4" fill="#d9e4ee" stroke="#222"/>' + sq(1.5, 8) + sq(14.5, 8) + sq(8, 4),
	ellipseArc: p('M2 10C-1 3 14 1 14 7c0 5-5 5-7 4', '#333', 1.2, '#d9e4ee') + sq(2, 10) + sq(8, 12),
	insertBlock: f('M6 1h7l2 2v8H6z', '#e4eef8', '#2e6490') + block + sq(1.500, 10) + f('M16 12v4h-4z', '#000'),
	makeBlock: at(1, 0, 1, block) + sq(3, 10),
	point: sq(8.5, 8.5),
	hatch: p('M0 3h16M0 13h16M3 0v16M13 0v16', '#1d4e80', 1.4) + p('M3 6l7 7M3 10l3 3M5 3l8 8M9 3l4 4', '#1d4e80', 1),
	region: f('M1 2h9l5 5v7H1z', '#dbe8f6', '#1d4e80') + c(8, 8, 3, '#fff', '#446'),
	table: box(1, 2, 14, 12, '#f5f8fc', '#2c5ca8') + f('M1 2h14v3H1z', '#4a78c8') + p('M1 8h14M1 11h14M5.500 5v9M10.500 5v9', '#6d90cc', 1),
	mtext: p('M3 14.500L8 2l5 12.500M4.500 10h7', '#111', 1.6),

	// object snap
	track: p('M3 9h9', '#444', 1.4) + sq(2.5, 9) + ring(13, 8.5),
	snapFrom: '<path d="M2.500 14V3H12" fill="none" stroke="#444" stroke-width="1.300" stroke-dasharray="3 1"/>' + sq(2.5, 13.5) + ring(13, 3),
	snapEnd: p('M3 13L13 3', '#222', 1.4) + ring(2.5, 13.5) + ring(13.5, 2.5),
	snapMid: p('M1 15L15 1', '#222', 1.4) + ring(8, 8),
	snapInt: p('M1 1l14 14M1 15L15 1', '#222', 1.5) + ring(8, 8),
	snapApp: p('M1 1l14 14', '#222', 1.5) + '<path d="M1 15L15 1" stroke="#222" stroke-width="1.500" stroke-dasharray="3 1.500"/>' + ring(8, 8),
	snapExt: p('M1 8h6', '#333', 1.3) + '<path d="M8 8h8" stroke="#333" stroke-width="1.300" stroke-dasharray="2 1"/>',
	snapCen: c(8, 8, 6.8) + ring(8, 8),
	snapQuad: c(8, 8, 5.5) + ring(8, 2) + ring(8, 14) + ring(2, 8) + ring(14, 8),
	snapTan: c(8.5, 8.5, 6) + ring(4, 4),
	snapPerp: p('M8 1v12M1 13h14', '#222', 1.4) + ring(8, 12.5),
	snapPar: p('M0 14L12 2M4 15L16 3', '#222', 1.6),
	snapIns: at(2, 0, 1, block) + ring(3, 9),
	snapNode: ring(9, 8),
	snapNear: p('M1 15L13 2', '#222', 1.5) + ring(9, 6) + ring(13, 10.5, 1.6),
	snapNone: magnet + '#8c8c84"/>' + p('M2 15L14 2', '#e02020', 1.8) + box(12.5, 12.5, 2.5, 2.5, '#fff', '#555'),
	snapSet: magnet + '#c02840"/>' + p('M3 12v3M10 9v3', '#ddd', 3) + box(12, 12, 3, 3, '#fff', '#0b4a88'),

	// dimension
	dimLinear: p('M1 1v14M15 1v14M2 5h12', '#111', 1.4) + f('M1 5l4-2v4zM15 5l-4-2v4z', '#000'),
	dimAligned: p('M0 5l5-4M11 15l5-4M3 4l9 9', '#111', 1.4) + f('M2 3l5 1-3 4zM13 13l-5-1 3-4z', '#000'),
	dimOrd: p('M6 15V6M6 14h9M8 9l6 0 1-3M6 6l4 5', '#111', 1.2) + p('M0 4l2 2 2-2M2 6v2M1 12h2v3H1zM5 1h2v2H5zM12 0l3 3M15 0l-3 3', '#1d5e9c', 0.9),
	dimRad: c(8, 8, 6.8, '#f0eee2', '#666') + p('M4 4l5 5', '#111', 1.3) + f('M3 3l5 1-3.500 3.500z', '#000'),
	dimDia: c(8, 8, 6.8, '#f0eee2', '#666') + p('M4 4l8 8', '#111', 1.3) + f('M3 3l5 1-3.500 3.500zM13 13l-5-1 3.500-3.500z', '#000'),
	dimAng: p('M0 15h16M0 12l9-9M9 3c3 1 5 4 5 9', '#111', 1.3) + f('M7 2l5 0-2 4zM14 15l-2-4h4z', '#000'),
	dimQuick: f('M3 3l7 0 1 3 2 0 0 9-2-4-1 1z', '#f0e020', '#58500c') + p('M1 1v14M15 1v14M2 4h12', '#111', 1.4) + f('M1 4l4-2v4zM15 4l-4-2v4z', '#000'),
	dimBase: p('M1 1v14M14 1v5M10 8v7M2 4h12M2 11h8', '#111', 1.3) + f('M1 4l3-2v4zM1 11l3-2v4zM10 11l-3-2v4z', '#000'),
	dimCont: p('M1 1v14M8 1v14M15 1v14M1 6h14', '#111', 1.3) + f('M1 6l3-2v4zM8 6L5 4v4zM8 6l3-2v4zM15 6l-3-2v4z', '#000'),
	leader: f('M3 3l6-1 0 4 4 4-1 5-6-5-2 0z', '#d8c820', '#4d4608') + f('M0 4l4-3v5z', '#111') + p('M11 6l2-5 2 5M12 4.500h2', '#1d5e9c'),
	tolerance: box(0.500, 3, 15, 10, '#dbe8f6', '#1d4e80') + p('M8 3v10M4.500 4v8M1.500 8h6M12 5v6M10 10v1', '#1d4e80') + '<circle cx="4.500" cy="8" r="2" fill="none" stroke="#1d4e80"/>',
	centerMark: c(8, 8, 6.8, '#f0eee2', '#666') + p('M8 5.500v5M5.500 8h5', '#111', 1.6),
	dimEdit: p('M4.500 9L8 1l3.500 8M6 6.500h4', '#1d4e88', 2) + hdim(12.5),
	dimTextEdit: at(2, -1, 0.85, pencil) + hdim(13),
	dimUpdate: p('M3 1v5M15 1v10M3 3h12', '#1d4e88', 1.3) + p('M1 4v11M12 6v9M2 9h10', '#111', 1.4) + f('M1 9l3-2v4zM12 9L9 7v4z', '#000'),

	// modify
	erase: p('M0 14h16', '#111') + f('M12.500 0L16 3l-6 6-3-3z', '#e8c850', '#555') + p('M7 6l3 3', '#3f76c0', 2.5) + f('M6 7l3 3-3 3-3-1-1-1z', '#f0e8e0', '#b33') + f('M3 10l3 3H2z', '#e04030'),
	copyObj: c(4, 5, 3, '#d5e0ec', '#446') + c(9, 10, 2.8, '#d5e0ec', '#446') + c(12, 13, 2.5, '#e5ecf2', '#446') + p('M6 2c5-2 7 1 7 4M11 5l2 2 2-2', '#1d5ea8', 1.5),
	mirror: f('M6 2v12H1z', '#fff', '#222') + f('M10 2v12h5z', '#a9b9c9', '#222') + p('M8 0v16', '#1580c8', 1.4),
	offset: p('M1 14C0 9 4 10 4 8c0-7 9-7 9 0v2h3M1 14h15', '#1c2c48', 1.3) + p('M4 12c2 0 3-1 3-3 0-4 3-4 3 0v3h6', '#1a82d8', 1.5),
	array: box(1, 1, 5.5, 5.5, '#dfe9f2', '#222') + box(9.500, 1, 5.5, 5.5, '#dfe9f2', '#222') + box(1, 9.500, 5.5, 5.5, '#dfe9f2', '#222') + box(9.500, 9.500, 5.5, 5.5, '#dfe9f2', '#222'),
	move: p('M8 2v12M2 8h12', '#2d649c', 2.2) + f('M8 0l3 4H5zM8 16l3-4H5zM0 8l4-3v6zM16 8l-4-3v6z', '#2d649c'),
	rotate: p('M11 3c5 3 4 11-3 11-6 0-8-7-4-10', '#3f6e98', 2.4) + f('M1 2l7-2-1 7z', '#2d5e8c'),
	scale: box(0.500, 0.500, 15, 15, '#dbe8f6', '#2d5e8c') + '<path d="M0 7.500h9V16" fill="none" stroke="#111" stroke-dasharray="1 1"/>',
	stretch: f('M1 1h7v14H1z', '#dbe8f6', '#222') + f('M8 1h2l5 14H8z', '#c0d2e4', '#1d4e80') + '<path d="M8 1v14" stroke="#111" stroke-dasharray="1 1"/>',
	trim: p('M0 9h5', '#111', 1.3) + p('M5 13l5-9', '#1a72c8', 1.5) + '<path d="M9 9h7" stroke="#1a72c8" stroke-dasharray="2 1"/>',
	extend: p('M0 9h5', '#111', 1.3) + p('M10 14l5-11', '#1a72c8', 1.5) + '<path d="M5 9h7" stroke="#1a72c8" stroke-dasharray="2 1"/>',
	breakAt: box(1, 3, 14, 11, '#d9e4ee', '#222') + sq(10, 3),
	break: p('M4 4H1v10h14V4h-3', '#222', 1.3, '#d9e4ee') + sq(4.5, 3.5) + sq(11.5, 3.5),
	chamfer: p('M.5 16V10M9 1h7', '#111', 1.3) + p('M1 9l8-8', '#1a82d8', 1.8) + '<path d="M.5 9V1h8" fill="none" stroke="#222" stroke-dasharray="1 1"/>',
	fillet: p('M1 13C1 5 5 1 12 1', '#1a72c8', 1.8) + '<path d="M.5 10V.5H9" fill="none" stroke="#222" stroke-dasharray="1 1"/>' + p('M1 16v-4M12 1h4', '#111'),
	explode: f('M1 4l3 2 1-3 2 3 3-2-1 3 2 2-3 1 0 4-3-2-4 1 2-4z', '#f4c820', '#e07018') + f('M1 12l2-1 4-4 3 2-5 6-3 0z', '#d02020') + p('M4 13l5-5', '#f8d8c0', 1) + p('M9 8l4-4', '#345', 1.5) + '<path d="M11 3l4-2M12 5l4 0M12 0v3" stroke="#58789c" stroke-dasharray="1 1"/>',

	// render
	hide: f('M0 6l8-2 8 2v6l-7 4-9-4z', '#4f78a8', '#2a4c78') + f('M9 9l7-3v6l-7 4z', '#88a8cc') + f('M2 7l6-2 6 2-6 2z', '#2c4468') + c(8, 4.500, 3.2, '#e0b838', '#8c6a10'),
	render: teapot,
	scenes: f('M1 7h14v9H1z', '#3a3a3a', '#111') + f('M1 2l14 3-1 2L1 5z', '#111') + p('M3 2l2 3M7 3l2 3M11 4l2 3', '#fff', 1.2) + p('M3 10h10M3 13h10', '#ccc', 1),
	lights: f('M6 3l4-2 4 4-6 4-1-2z', '#5580c0', '#2d568c') + p('M8 2L2 3l3 10', '#3f6ea8', 1.8) + f('M3 13h6v2H2z', '#5580c0', '#2d568c') + f('M9 8l5-3 1 4-4 2z', '#f8ec80', '#d8b830'),
	materials: c(7, 10, 5, '#2b9a60', '#0b5230') + f('M4 9c1-2 3-3 5-2L6 10z', '#a8e8bc') + at(2, 0, 0.85, brush),
	matLib: at(-3, 0, 1, sheet) + c(12, 12, 3.2, '#2b9a60', '#0b5230') + at(4, 1, 0.75, brush),
	mapping: at(2, 3, 0.8, teapot) + p('M1.500 5v10h14.500', '#c82020', 1) + p('M2 0Q0 2 2 4M4 1v2h2V1M8 1l1.500 2L11 1M13 0q2 2 0 4', '#111', 0.9),
	background: f('M0 1h16v6H0z', '#3f7cb0') + f('M0 6l5-3 5 3 6-2v5H0z', '#dfe8ee') + f('M0 8h16v7H0z', '#5c8a3c') + p('M1 11l6-1M5 13l9-2', '#c8b870', 1.2),
	fog: f('M0 1h16v14H0z', '#244f74') + f('M0 1h6l10 12v2h-2L0 5z', '#a9cde8') + f('M7 1h9v11z', '#6ba0cc') + f('M0 7c6 0 9 3 12 8H5z', '#3c5c50'),
	lsNew: tree + p('M11.500 3v9M7 7.500h9M8.500 4.500l6 6M14.500 4.500l-6 6', '#5a9ac8', 1),
	lsEdit: tree + at(4, 1, 0.75, pencil),
	lsLib: at(3, 0, 0.95, sheet) + tree,
	renderPrefs: at(0, -1, 0.9, teapot) + box(5.500, 7.500, 10, 7, '#dbe8f6', '#2c5ca8') + p('M7 10.500h7M7 12.500h7', '#2c5ca8', 1),
	stats: box(0.500, 0.500, 9, 13, '#fff', '#777') + p('M2 3h6M2 5h6M2 7h3', '#222', 1) + at(2, 2, 0.88, teapot),

	// window parts
	winMin: '<rect x="3" y="10" width="6" height="3" fill="#fff"/>',
	winMax: '<path d="M3 3h10v10H3z" fill="none" stroke="#fff"/><path d="M3 4h10" stroke="#fff" stroke-width="2"/>',
	winRestore: '<path d="M6 5V3h7v7h-2M3 6h7v7H3z" fill="none" stroke="#fff" stroke-width="1.200"/>',
	winClose: p('M3.500 3.500l9 9M12.500 3.500l-9 9', '#fff', 1.9),
	smallClose: p('M4 4l8 8M12 4l-8 8', '#000', 2.2),
	up: p('M4 10l4-4 4 4', '#4d6185', 2.2),
	down: p('M4 6l4 4 4-4', '#4d6185', 2.2),
	left: p('M10 4L6 8l4 4', '#4d6185', 2.2),
	right: p('M6 4l4 4-4 4', '#4d6185', 2.2),
	first: p('M4 4v8', '#000', 1.6) + f('M12 3v10L6 8z', '#000'),
	prev: f('M11 3v10L5 8z', '#000'),
	next: f('M5 3v10l6-5z', '#000'),
	last: p('M12 4v8', '#000', 1.6) + f('M4 3v10l6-5z', '#000'),
	dish: f('M3 1c-2 6 3 10 10 8z', '#9db4d8', '#2a4674') + p('M7 5l5-4M8 9v4', '#2a4674', 1.6) + f('M4 13h8v2.500H3z', '#6d8cb8', '#2a4674') + c(12, 2, 1.2, '#dde', '#2a4674'),
	caret: f('M2 7h12l-6 6z', '#000')
};

const draw = name => `<svg viewBox="0 0 16 16" aria-hidden="true">${icons[name]}</svg>`;

document.querySelectorAll('[data-icon]').forEach(el => {
	el.innerHTML = draw(el.dataset.icon);
});

document.querySelectorAll('[data-tools]').forEach(el => {
	el.innerHTML = el.dataset.tools.split(' ').map(name => {
		if (name === '|') return '<span class="sep"></span>';
		return `<button class="tool${name === 'drop' ? ' narrow' : ''}" aria-label="${name}">${draw(name)}</button>`;
	}).join('');
});
```
